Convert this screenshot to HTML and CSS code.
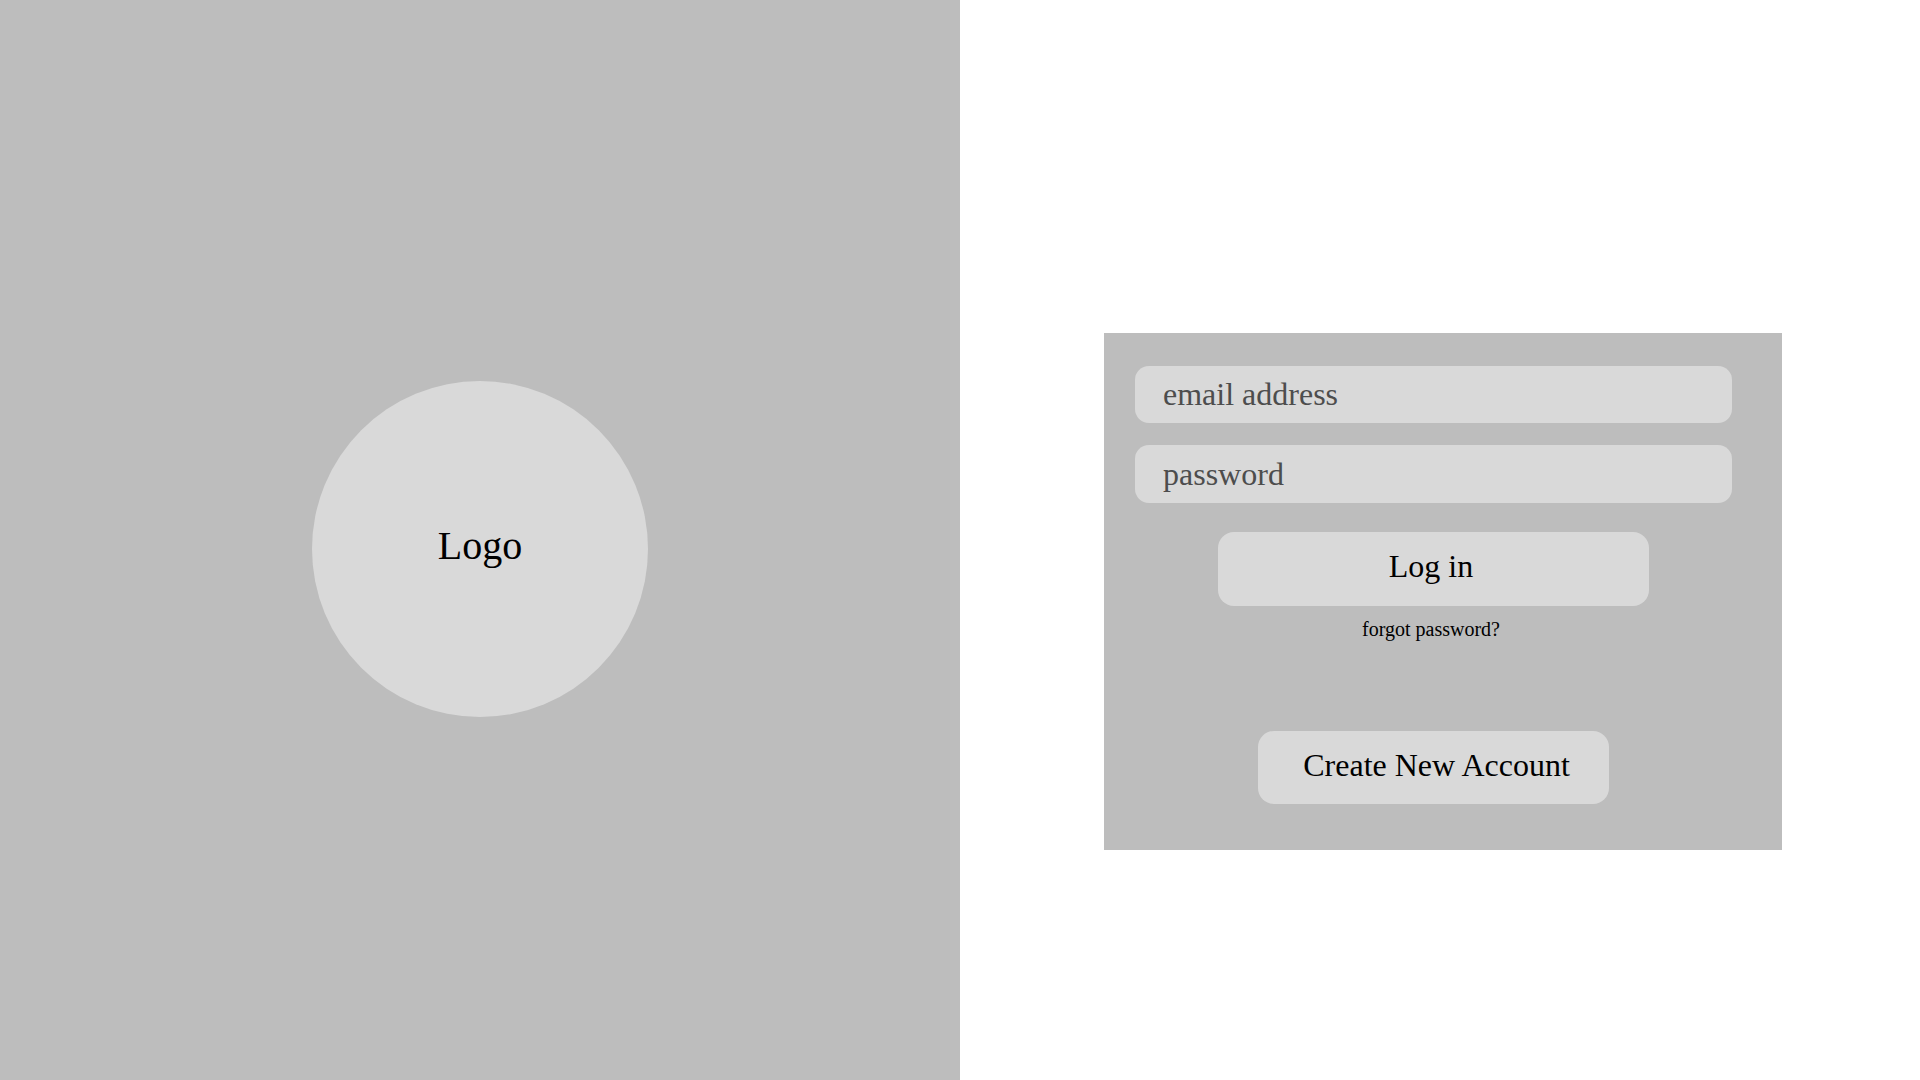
FILE: index.html
```html
<!DOCTYPE html>
<html lang="en">
<head>
<meta charset="utf-8">
<title>Log in</title>
<link rel="stylesheet" href="styles.css">
</head>
<body>
<div class="page">
  <section class="brand">
    <div class="logo"><span class="logo-text">Logo</span></div>
  </section>
  <section class="auth">
    <form class="card">
      <input class="field" type="email" placeholder="email address">
      <input class="field" type="password" placeholder="password">
      <button class="btn btn-login" type="button">Log in</button>
      <a class="forgot" href="#">forgot password?</a>
      <button class="btn btn-create" type="button">Create New Account</button>
    </form>
  </section>
</div>
</body>
</html>
```
FILE: styles.css
```css
* { box-sizing: border-box; }
html, body {
  margin: 0;
  padding: 0;
  width: 1920px;
  height: 1080px;
  overflow: hidden;
  background: #ffffff;
  font-family: "Liberation Serif", "Times New Roman", serif;
}
.page {
  display: flex;
  width: 1920px;
  height: 1080px;
}
.brand {
  width: 960px;
  height: 1080px;
  background: #bdbdbd;
  display: flex;
  flex-direction: column;
  align-items: center;
  padding-top: 381px;
}
.logo {
  width: 336px;
  height: 336px;
  border-radius: 50%;
  background: #d9d9d9;
  display: flex;
  align-items: center;
  justify-content: center;
}
.logo-text {
  font-size: 40px;
  line-height: 1;
  color: #000;
  margin-bottom: 7px;
}
.auth {
  flex: 1;
  padding-top: 333px;
  padding-left: 144px;
}
.card {
  width: 678px;
  height: 517px;
  background: #bdbdbd;
  padding: 33px 50px 0 31px;
  display: flex;
  flex-direction: column;
  align-items: center;
}
.field {
  width: 597px;
  height: 57px;
  border: none;
  outline: none;
  border-radius: 14px;
  background: #d9d9d9;
  padding: 0 0 0 28px;
  margin: 0 0 22px 0;
  font-family: inherit;
  font-size: 32px;
  color: #4d4d4d;
}
.field::placeholder {
  color: #4d4d4d;
  opacity: 1;
}
.field + .field { margin-bottom: 0; height: 58px; }
.btn {
  border: none;
  background: #d9d9d9;
  border-radius: 16px;
  font-family: inherit;
  font-size: 32px;
  color: #000;
  padding: 0 0 5px 0;
  cursor: pointer;
}
.btn-login {
  width: 431px;
  height: 74px;
  margin-top: 29px;
  padding-right: 5px;
}
.forgot {
  margin-top: 12px;
  margin-right: 5px;
  font-size: 20px;
  line-height: 23px;
  color: #000;
  text-decoration: none;
}
.btn-create {
  width: 351px;
  height: 73px;
  margin-top: 90px;
  padding-left: 6px;
}
```
